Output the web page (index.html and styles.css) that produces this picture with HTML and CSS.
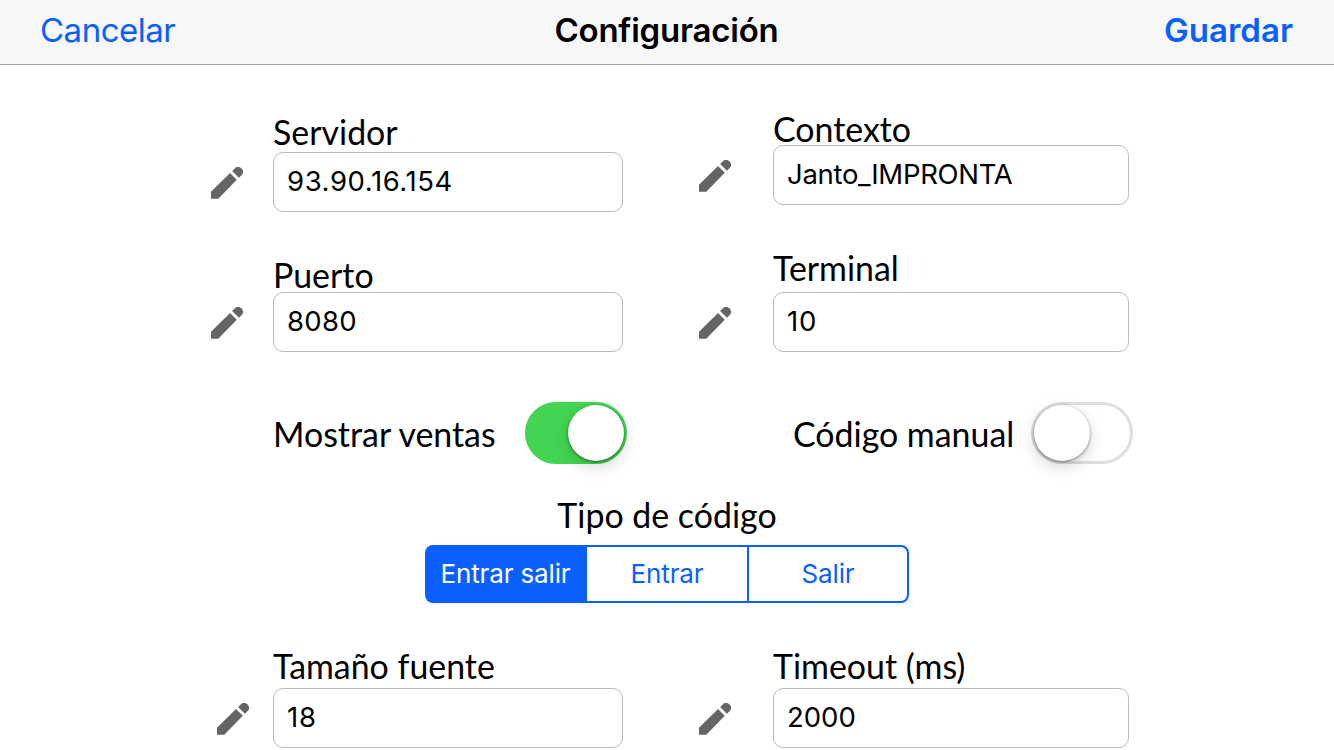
FILE: index.html
```html
<!DOCTYPE html>
<html lang="es">
<head>
<meta charset="utf-8">
<title>Configuración</title>
<link rel="stylesheet" href="styles.css">
</head>
<body>
<svg class="defs" width="0" height="0" aria-hidden="true">
  <symbol id="pencil" viewBox="3 3 18 18" overflow="visible">
    <path d="M3 16.9V20.5Q3 20.9 3.4 20.9H7.1L17.5 10.2L13.7 6.4Z"/>
    <path d="M14.9 5.3L16.2 4Q17.2 2.7 18.5 2.9Q19.6 3.2 20.4 4Q21.2 5.1 21 6.2Q20.9 6.8 20.4 7.3L18.7 9.1Z"/>
  </symbol>
</svg>
<header class="navbar">
  <a class="nav-action cancel">Cancelar</a>
  <h1 class="nav-title">Configuración</h1>
  <a class="nav-action save">Guardar</a>
</header>
<main>
  <section class="fields fields-top">
    <div class="column column-left">
      <div class="field server">
        <label class="label">Servidor</label>
        <div class="entry"><svg class="pencil"><use href="#pencil"/></svg><div class="input"><span class="v-server">93.90.16.154</span></div></div>
      </div>
      <div class="field port">
        <label class="label">Puerto</label>
        <div class="entry"><svg class="pencil"><use href="#pencil"/></svg><div class="input"><span class="v-number">8080</span></div></div>
      </div>
    </div>
    <div class="column column-right">
      <div class="field context">
        <label class="label">Contexto</label>
        <div class="entry"><svg class="pencil"><use href="#pencil"/></svg><div class="input"><span class="v-context">Janto_IMPRONTA</span></div></div>
      </div>
      <div class="field terminal">
        <label class="label">Terminal</label>
        <div class="entry"><svg class="pencil"><use href="#pencil"/></svg><div class="input"><span class="v-short">10</span></div></div>
      </div>
    </div>
  </section>
  <section class="switches">
    <span class="label sales">Mostrar ventas</span>
    <span class="switch on"><span class="knob"></span></span>
    <span class="label manual">Código manual</span>
    <span class="switch"><span class="knob"></span></span>
  </section>
  <section class="code-type">
    <span class="label type-label">Tipo de código</span>
    <div class="segmented">
      <span class="segment active">Entrar salir</span>
      <span class="segment">Entrar</span>
      <span class="segment">Salir</span>
    </div>
  </section>
  <section class="fields fields-bottom">
    <div class="column column-left">
      <div class="field size">
        <label class="label">Tamaño fuente</label>
        <div class="entry"><svg class="pencil"><use href="#pencil"/></svg><div class="input"><span class="v-short">18</span></div></div>
      </div>
    </div>
    <div class="column column-right">
      <div class="field timeout">
        <label class="label">Timeout (ms)</label>
        <div class="entry"><svg class="pencil"><use href="#pencil"/></svg><div class="input"><span>2000</span></div></div>
      </div>
    </div>
  </section>
</main>
</body>
</html>
```
FILE: styles.css
```css
* { box-sizing: border-box; }
body {
  margin: 0;
  height: 750px;
  overflow: hidden;
  background: #fff;
  color: #000;
  font-family: Inter, "Liberation Sans", sans-serif;
}
.defs { display: block; }
.navbar {
  display: grid;
  grid-template-columns: 1fr auto 1fr;
  height: 65px;
  padding: 10px 41px 0 40px;
  background: #f7f7f7;
  border-bottom: 1px solid #a2a2a2;
  font-size: 33px;
  line-height: 40px;
}
.nav-title { margin: 0; font-size: 33px; font-weight: 600; letter-spacing: -.22px; }
.nav-action { color: #0a60ff; }
.cancel { letter-spacing: -.5px; }
.save { justify-self: end; font-weight: 600; }

.label {
  display: block;
  font: 33.9px/40px Lato, "Liberation Sans", sans-serif;
  white-space: nowrap;
}
.fields { display: flex; }
.fields-top { height: 287px; }
.column-left { width: 412px; margin-left: 211px; }
.column-right { width: 430px; margin-left: 76px; }
.column-left .label { margin-left: 62px; }
.column-right .label { margin-left: 74px; }
.entry { display: flex; justify-content: space-between; align-items: center; }
.pencil { width: 32px; height: 32px; margin-top: 2px; fill: #646464; }
.input {
  width: 350px;
  height: 60px;
  padding: 0 13px;
  border: 1px solid #bdbdbd;
  border-radius: 10px;
  background: #fff;
  font-size: 27.5px;
  line-height: 57px;
  white-space: nowrap;
}
.v-server { letter-spacing: .58px; }
.v-number { letter-spacing: .3px; }
.v-short { letter-spacing: .9px; }
.v-context { letter-spacing: -.3px; }
.column-right .input { width: 356px; }
.server { padding-top: 47px; }
.context { padding-top: 44px; }
.context .label { height: 36px; }
.port { padding-top: 43px; }
.port .label { height: 37px; }
.terminal { padding-top: 43px; }
.terminal .label { height: 44px; }
.fields-bottom .label { height: 42px; }
.fields-bottom .column-left .pencil { margin-left: 6px; }

.switches { display: flex; height: 143px; padding: 50px 0 0 273px; }
.switches .label { margin-top: 12px; }
.sales { width: 252px; }
.manual { width: 238px; margin-left: 166px; }
.switch {
  width: 102px;
  height: 62px;
  border: 3px solid #dfdfdf;
  border-radius: 31px;
}
.switch.on { display: flex; justify-content: flex-end; border-color: #43d551; background: #43d551; }
.knob {
  display: block;
  width: 56px;
  height: 56px;
  border-radius: 50%;
  background: #fff;
  box-shadow: 0 1px 3px rgba(0, 0, 0, .45), 0 6px 16px rgba(0, 0, 0, .16);
}

.code-type { display: flex; flex-direction: column; align-items: center; height: 151px; }
.type-label { height: 50px; }
.segmented {
  display: grid;
  grid-template-columns: 160px 160px 160px;
  width: 484px;
  height: 58px;
  border: 2px solid #0a60ff;
  border-radius: 8px;
  color: #0a60ff;
  font-size: 26px;
  letter-spacing: -.15px;
  line-height: 54px;
  text-align: center;
}
.segment + .segment + .segment { border-left: 2px solid #0a60ff; }
.segment.active { padding-right: 3px; background: #0a60ff; color: #fff; }
```
